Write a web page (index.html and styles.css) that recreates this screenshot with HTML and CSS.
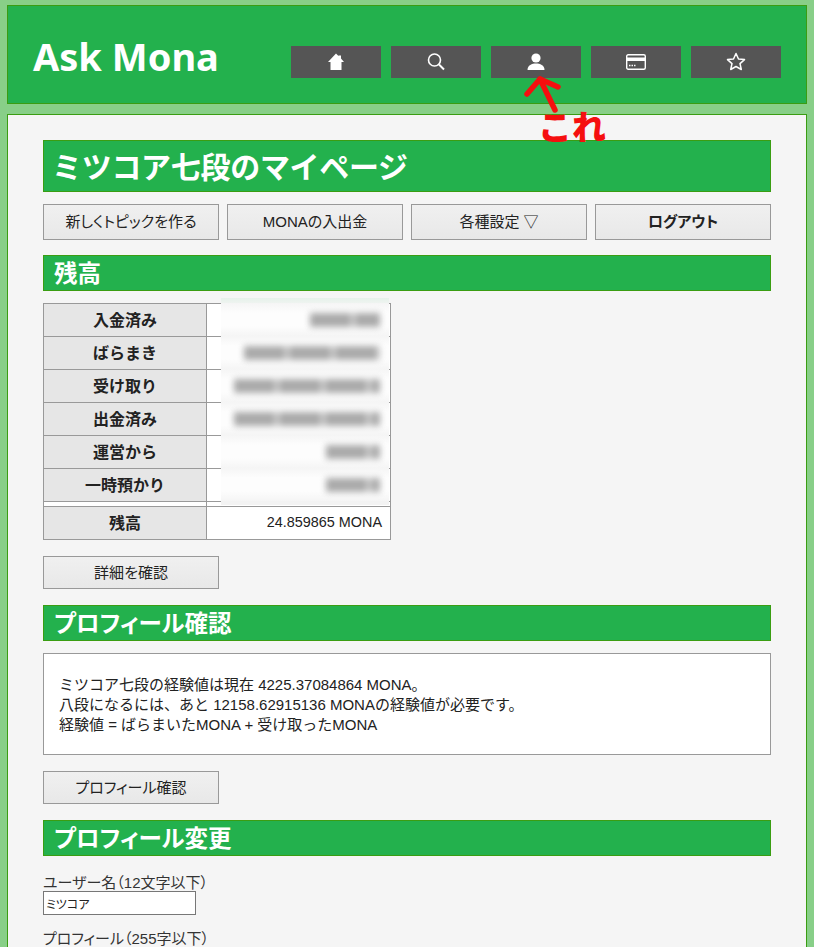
FILE: index.html
```html
<!DOCTYPE html>
<html lang="ja">
<head>
  <meta charset="UTF-8" />
  <meta name="viewport" content="width=device-width, initial-scale=1.0" />
  <title>Ask Mona</title>
  <link rel="stylesheet" href="styles.css">
</head>
<body>
  <header class="site-header">
    <div class="logo">Ask Mona</div>
    <nav class="nav">
      <a class="nav-btn">
        <svg width="18" height="18" viewBox="0 0 18 18"><path fill="#fff" d="M9 0.500 L11.500 3 L11.500 2.500 L14 2.500 L14 5.500 L17 9 L14.500 9 L14.500 17 L3.500 17 L3.500 9 L1 9 Z"/></svg>
      </a>
      <a class="nav-btn">
        <svg width="18" height="18" viewBox="0 0 18 18" fill="none" stroke="#fff"><circle cx="7.500" cy="7" r="6" stroke-width="1.600"/><path d="M12 11.500 L17 16.500" stroke-width="2"/></svg>
      </a>
      <a class="nav-btn">
        <svg width="18" height="18" viewBox="0 0 18 18"><circle cx="9" cy="5" r="4.600" fill="#fff"/><path fill="#fff" d="M0.500 17 C0.500 12 5 10.500 9 10.500 C13 10.500 17.500 12 17.500 17 Z"/></svg>
      </a>
      <a class="nav-btn">
        <svg width="20" height="16" viewBox="0 0 20 16" fill="none"><rect x="0.700" y="0.700" width="18.600" height="14.600" rx="1.500" stroke="#fff" stroke-width="1.400"/><rect x="1" y="3.500" width="18" height="3.500" fill="#fff"/><path d="M3 11.500h1.500M5.500 11.500h1.500M8 11.500h1.500" stroke="#fff" stroke-width="1.500"/></svg>
      </a>
      <a class="nav-btn">
        <svg width="20" height="19" viewBox="0 0 20 19"><path fill="none" stroke="#fff" stroke-width="1.500" stroke-linejoin="round" d="M10 1.500 L12.500 7 L18.500 7.600 L14 11.600 L15.300 17.500 L10 14.500 L4.700 17.500 L6 11.600 L1.500 7.600 L7.500 7 Z"/></svg>
      </a>
    </nav>
  </header>

  <main class="content">
    <h1 class="title">ミツコア七段のマイページ</h1>

    <div class="actions">
      <a class="btn">新しくトピックを作る</a>
      <a class="btn">MONAの入出金</a>
      <a class="btn">各種設定 ▽</a>
      <a class="btn btn-bold">ログアウト</a>
    </div>

    <h2 class="section">残高</h2>
    <div class="balance">
      <table class="balance-table">
        <tr><th>入金済み</th><td></td></tr>
        <tr><th>ばらまき</th><td></td></tr>
        <tr><th>受け取り</th><td></td></tr>
        <tr><th>出金済み</th><td></td></tr>
        <tr><th>運営から</th><td></td></tr>
        <tr><th>一時預かり</th><td></td></tr>
        <tr class="spacer"><th></th><td></td></tr>
        <tr><th>残高</th><td>24.859865 MONA</td></tr>
      </table>

      <!-- ぼかし -->
      <div class="blur-patch">
        <div class="blur-row"><span class="blur-bar w1"></span></div>
        <div class="blur-row"><span class="blur-bar w2"></span></div>
        <div class="blur-row"><span class="blur-bar w3"></span></div>
        <div class="blur-row"><span class="blur-bar w3"></span></div>
        <div class="blur-row"><span class="blur-bar w4"></span></div>
        <div class="blur-row"><span class="blur-bar w4"></span></div>
      </div>
    </div>

    <a class="btn btn-small">詳細を確認</a>

    <h2 class="section">プロフィール確認</h2>
    <div class="note">
      ミツコア七段の経験値は現在 4225.37084864 MONA。<br>
      八段になるには、あと 12158.62915136 MONAの経験値が必要です。<br>
      経験値 = ばらまいたMONA + 受け取ったMONA
    </div>
    <a class="btn btn-small">プロフィール確認</a>

    <h2 class="section">プロフィール変更</h2>
    <label class="field-label">ユーザー名（12文字以下）</label>
    <input class="field-input" type="text" value="ミツコア">
    <label class="field-label field-next">プロフィール（255字以下）</label>
  </main>

  <!-- 赤い手書きの注釈 -->
  <svg class="scribble" width="50" height="50" viewBox="0 0 50 50" fill="none" stroke="#f50f0f" stroke-width="5.500" stroke-linecap="round" stroke-linejoin="round">
    <path d="M40 36 L25 5"/>
    <path d="M12 20 L25 5 L43 13"/>
  </svg>
  <span class="scribble-text">これ</span>
</body>
</html>
```

FILE: styles.css
```css
html, body { height: 100%; }
body {
  margin: 0;
  padding: 5px 7px 0;
  box-sizing: border-box;
  background: #88cf88;
  font-family: "Liberation Sans", "Noto Sans CJK JP", sans-serif;
  font-size: 15px;
  color: #222;
  overflow: hidden;
  position: relative;
}

.site-header {
  display: flex;
  align-items: center;
  justify-content: space-between;
  height: 99px;
  box-sizing: border-box;
  padding: 0 25px 0 25px;
  background: #23b14d;
  border: 1px solid #3a9d12;
}
.logo {
  font-family: "Noto Sans", sans-serif;
  font-size: 38px;
  font-weight: 700;
  color: #fff;
  margin-top: 2px;
}
.nav { display: flex; gap: 10px; margin-top: 14px; }
.nav-btn {
  display: flex;
  align-items: center;
  justify-content: center;
  width: 90px;
  height: 32px;
  background: #555;
}

.content {
  margin-top: 10px;
  min-height: 900px;
  box-sizing: border-box;
  padding: 25px 35px 0;
  background: #f5f5f5;
  border: 1px solid #3a9d12;
}

.title, .section {
  margin: 0;
  box-sizing: border-box;
  color: #fff;
  background: #23b14d;
  border: 1px solid #3a9d12;
  font-weight: 700;
  font-family: "Noto Sans CJK JP", sans-serif;
}
.title { height: 52px; line-height: 49px; font-size: 30px; padding-left: 8px; letter-spacing: -0.3px; }
.section { height: 36px; line-height: 33px; font-size: 23.500px; margin-top: 15px; padding-left: 10px; font-feature-settings: "palt"; }

.actions { display: flex; gap: 8px; margin-top: 12px; }
.btn {
  display: block;
  flex: 1;
  box-sizing: border-box;
  height: 36px;
  line-height: 34px;
  text-align: center;
  border: 1px solid #999;
  background: linear-gradient(#f0f0f0, #e8e8e8);
  color: #222;
  font-feature-settings: "palt";
}
.btn-bold { font-weight: 700; }
.btn-small { width: 176px; height: 33px; line-height: 31px; margin-top: 16px; }
.btn-small + .section { margin-top: 16px; }

.balance { position: relative; margin-top: 12px; width: 348px; }
.balance-table {
  border-collapse: collapse;
  width: 348px;
  table-layout: fixed;
}
.balance-table th, .balance-table td {
  height: 32px;
  padding: 0 8px 2px;
  border: 1px solid #999;
  box-sizing: border-box;
}
.balance-table tr { height: 33px; }
.balance-table th { width: 163px; background: #e6e6e6; font-weight: 700; font-size: 16px; }
.balance-table td { background: #fff; text-align: right; font-size: 14.400px; }
.balance-table .spacer { height: 5px; }
.balance-table .spacer th, .balance-table .spacer td { height: 5px; padding: 0; background: #fff; }

.blur-patch {
  position: absolute;
  top: -5px;
  left: 178px;
  width: 168px;
  height: 207px;
  padding-top: 5px;
  box-sizing: border-box;
  background: linear-gradient(#e6f1ea, #f3f5f4 8px, #f3f3f3);
}
.blur-row {
  display: flex;
  justify-content: flex-end;
  align-items: center;
  height: 33px;
  padding-right: 9px;
  background: linear-gradient(#f5f5f5, #fdfdfd 30%, #fdfdfd 70%, #f5f5f5);
}
.blur-bar {
  display: block;
  height: 14px;
  background: repeating-linear-gradient(90deg, #aaa 0 40px, #c8c8c8 40px 46px);
  filter: blur(3px);
}
.w1 { width: 70px; }
.w2 { width: 136px; }
.w3 { width: 146px; }
.w4 { width: 54px; }

.note {
  box-sizing: border-box;
  height: 102px;
  margin-top: 12px;
  padding: 21px 15px;
  line-height: 20px;
  background: #fff;
  border: 1px solid #999;
}

.field-label { display: block; margin-top: 18px; line-height: 17px; color: #333; font-feature-settings: "palt"; }
.field-input {
  display: block;
  box-sizing: border-box;
  width: 153px;
  height: 24px;
  padding: 0 2px;
  border: 1px solid #777;
  font: 12px "Liberation Sans", "Noto Sans CJK JP", sans-serif;
  font-feature-settings: "palt";
  color: #222;
}
.field-next { margin-top: 15px; }

.scribble { position: absolute; top: 74px; left: 515px; }
.scribble-text {
  position: absolute;
  top: 103px;
  left: 538px;
  font-family: "Noto Sans CJK JP", sans-serif;
  font-size: 34px;
  font-weight: 900;
  line-height: 46px;
  color: #f50f0f;
}
```
